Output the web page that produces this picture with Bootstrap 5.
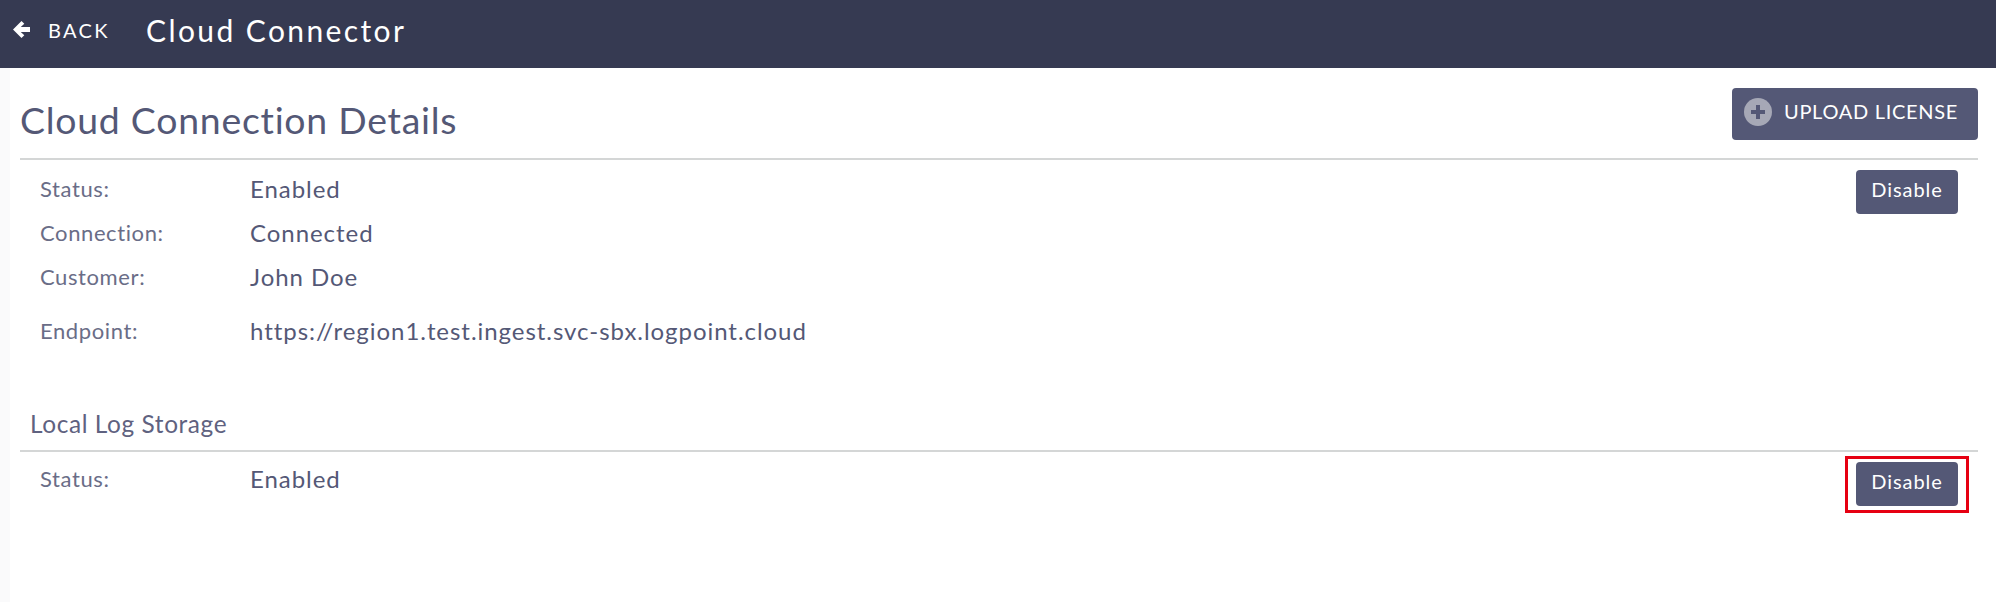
<!DOCTYPE html>
<html lang="en">
<head>
<meta charset="utf-8">
<title>Cloud Connector</title>
<link href="https://cdn.jsdelivr.net/npm/bootstrap@5.3.0/dist/css/bootstrap.min.css" rel="stylesheet">
<style>
html,body{height:100%;}
body{font-family:"Lato","Liberation Sans",sans-serif;background:#fff;color:#545876;overflow:hidden;}
.topbar{height:68px;background:#363a52;color:#fff;padding:0 0 9px 13px;}
.back-link{font-size:20px;letter-spacing:2.3px;color:#fff;text-decoration:none;width:133px;font-weight:400;}
.back-link svg{margin-right:18px;flex:none;}
.app-title{font-size:30px;letter-spacing:2.4px;font-weight:400;margin:0;line-height:1;}
.page-body{padding:20px 18px 0 20px;}
.page-title{font-size:37.4px;font-weight:400;letter-spacing:.75px;margin:12px 0 0;color:#545876;line-height:1;}
.head-row{height:72px;border-bottom:2px solid #d4d6d6;padding-bottom:18px;}
.upload-btn{background:#545876;border:0;color:#fff;height:52px;width:246px;border-radius:4px;font-size:20px;letter-spacing:.7px;padding:0 0 4px 12px;}
.upload-txt{margin-top:-2px;}
.plus-dot{width:28px;height:28px;border-radius:50%;background:#a6a8b6;margin-right:12px;flex:none;}
.sec-body{padding:0 20px;position:relative;}
.info-line{height:44px;font-size:24px;letter-spacing:.95px;}
.info-line.tall{height:64px;}
.info-key{width:210px;font-size:22px;letter-spacing:.6px;color:#6a6d87;padding-bottom:2px;}
.info-val{color:#545876;}
.disable-btn{background:#545876;border:0;color:#fff;width:102px;height:44px;border-radius:4px;font-size:20px;letter-spacing:.95px;padding:0 0 6px;}
.first-btn{margin-top:3px;}
.sec-title{font-size:24.4px;letter-spacing:.6px;color:#5f6280;padding:0 0 9px 10px;border-bottom:2px solid #d4d6d6;line-height:34px;margin-top:44px;}
.marked{outline:3px solid #e60012;padding:3px 8px 4px;margin:7px -8px -4px;}
.edge-band{position:absolute;left:0;top:68px;bottom:0;width:10px;background:#fafafb;}
.first-body{padding-top:7px;}
.second-line{margin-top:5px;}
</style>
</head>
<body>
<header class="topbar d-flex align-items-center">
  <a class="back-link d-flex align-items-center" href="#">
    <svg width="17" height="17" viewBox="0 0 17 17" aria-hidden="true"><path d="M8.5 0 0 8.5 8.5 17l2.8-2.8-3.5-3.2H17V6H7.8l3.5-3.2z" fill="#fff"/></svg>BACK</a>
  <h1 class="app-title">Cloud Connector</h1>
</header>
<div class="edge-band"></div>
<main class="page-body">
  <div class="head-row d-flex justify-content-between align-items-center">
    <h2 class="page-title">Cloud Connection Details</h2>
    <button class="upload-btn d-flex align-items-center" type="button">
      <span class="plus-dot d-flex align-items-center justify-content-center">
        <svg width="16" height="16" viewBox="0 0 16 16" aria-hidden="true"><path d="M6 1h4v5h5v4h-5v5H6v-5H1V6h5z" fill="#545876"/></svg>
      </span><span class="upload-txt">UPLOAD LICENSE</span>
    </button>
  </div>
  <div class="sec-body first-body d-flex justify-content-between">
    <div>
      <div class="info-line d-flex align-items-center"><span class="info-key">Status:</span><span class="info-val">Enabled</span></div>
      <div class="info-line d-flex align-items-center"><span class="info-key">Connection:</span><span class="info-val">Connected</span></div>
      <div class="info-line d-flex align-items-center"><span class="info-key">Customer:</span><span class="info-val">John Doe</span></div>
      <div class="info-line tall d-flex align-items-center"><span class="info-key">Endpoint:</span><span class="info-val">https://region1.test.ingest.svc-sbx.logpoint.cloud</span></div>
    </div>
    <div><button class="disable-btn first-btn" type="button">Disable</button></div>
  </div>
  <div class="sec-title">Local Log Storage</div>
  <div class="sec-body d-flex justify-content-between">
    <div class="info-line second-line d-flex align-items-center w-100"><span class="info-key">Status:</span><span class="info-val">Enabled</span></div>
    <div class="marked"><button class="disable-btn d-block" type="button">Disable</button></div>
  </div>
</main>
<script src="https://cdn.jsdelivr.net/npm/bootstrap@5.3.0/dist/js/bootstrap.bundle.min.js"></script>
</body>
</html>
